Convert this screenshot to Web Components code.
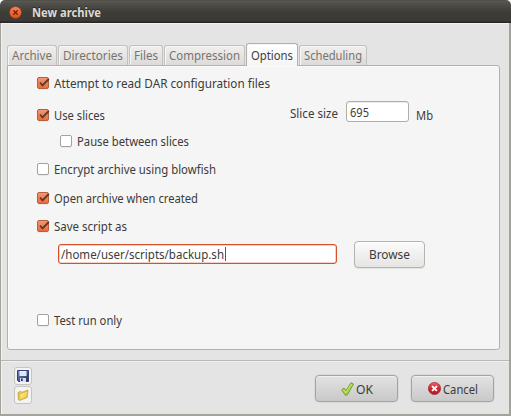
<!DOCTYPE html>
<html lang="en"><head><meta charset="utf-8"><title>New archive</title>
<style>html,body{margin:0;width:511px;height:416px;overflow:hidden;background:#fff}</style></head>
<body><archive-window></archive-window>
<script>
const define=(name,html,ready)=>customElements.define(name,class extends HTMLElement{
  constructor(){super();const t=document.createElement('template');t.innerHTML=html;
    this.attachShadow({mode:'open'}).append(t.content.cloneNode(true));}
  connectedCallback(){if(ready)ready.call(this,this.shadowRoot);}
});

// A label condensed or widened to the width given in its "w" attribute.
define('fit-label',`<style>:host{display:block;flex:none;height:18px;line-height:18px;white-space:pre}
span{display:inline-block;transform-origin:0 50%}</style><span><slot></slot></span>`,function(r){
  const s=r.querySelector('span'),w=+this.getAttribute('w');this.style.width=w+'px';
  const n=s.getBoundingClientRect().width;if(n)s.style.transform='scaleX('+w/n+')';
});

define('title-bar',`<style>:host{display:flex;align-items:center;box-sizing:border-box;height:23px;padding:1px 0 0 9px;gap:10px;
background:linear-gradient(#4a4843 0,#5b5953 1px,#53514b 3px,#3d3c37 12px,#3b3a36 21px,#272622 22px);border-radius:5px 5px 0 0;color:#dfdbd2;font-weight:700;text-shadow:0 -1px #292824}
svg{display:block}fit-label{margin-top:-1px}</style>
<svg width="13" height="13" viewBox="0 0 13 13"><defs><linearGradient id="g" x2="0" y2="1"><stop stop-color="#f6845a"/><stop offset="1" stop-color="#e24c16"/></linearGradient></defs><circle cx="6.5" cy="6.5" r="6" fill="url(#g)" stroke="#8a3a1e" stroke-width=".7"/><path d="M4.4 4.4l4.2 4.2M8.6 4.4L4.4 8.6" stroke="#43200f" stroke-width="1.2"/></svg>
<fit-label w="69"><slot></slot></fit-label>`);

define('tab-item',`<style>:host{display:flex;box-sizing:border-box;height:20px;padding:0 4px;border:1px solid #c3c1be;border-bottom:0;border-radius:3px 3px 0 0;
background:linear-gradient(#f0efee,#dddbd9);box-shadow:inset 1px 1px #f7f7f6;color:#77746f}
:host([active]){height:23px;padding-top:2px;margin-bottom:-1px;background:linear-gradient(#fff,#f5f5f5);border-color:#b2b0ad;color:#3f3e3b;z-index:1}</style><slot></slot>`);

define('check-box',`<style>:host{display:flex;align-items:center;gap:5px;flex:none}
i{display:block;box-sizing:border-box;width:12px;height:12px;border:1px solid #a5a29e;border-radius:2px;background:#fff;box-shadow:0 1px #e9e9e8}
svg{display:none;margin:-2px}
:host([checked]) i{border-color:#b5603f;background:linear-gradient(#f39671,#ed6c3c)}
:host([checked]) svg{display:block}</style>
<i><svg width="15" height="14" viewBox="0 0 15 14"><path d="M4 6.5L6.5 9.4L12.8 3" fill="none" stroke="#5e3a2c" stroke-width="1.8"/></svg></i><slot></slot>`);

define('text-entry',`<style>:host{display:flex;align-items:center;box-sizing:border-box;flex:none;background:#fff;border:1px solid #b0aeaa;border-radius:3px;padding-left:3px;box-shadow:inset 0 1px #ececeb}
:host([focused]){border-color:#d4512a;box-shadow:inset 0 0 0 .5px #eda18a;padding-left:2px}
b{display:none;width:1px;height:14px;background:#555;margin-left:1px}:host([focused]) b{display:block}</style><slot></slot><b></b>`);

define('push-button',`<style>:host{display:flex;align-items:center;justify-content:center;box-sizing:border-box;flex:none;border:1px solid #a5a4a2;border-radius:4px;gap:3px;
background:linear-gradient(#e2e2e2,#c9c9c9);box-shadow:inset 0 1px #f0f0f0,0 0 0 .5px #cfcfce}
:host([light]){background:linear-gradient(#fbfbfb,#e6e5e4);border-color:#b5b3b0;box-shadow:inset 0 1px #fff,0 1px #e5e5e4}
:host([tool]){width:18px;height:18px;background:#f3f3f3;border-color:#c5c4c2;border-radius:3px;box-shadow:none}
</style><slot></slot>`);

define('options-panel',`<style>:host{display:block;box-sizing:border-box;width:493px;height:285px;border:1px solid #b3b1ae;border-radius:0 3px 3px 3px;background:#f5f5f5;padding:7px 0 0 29px;box-shadow:inset 1px 1px #fbfbfb}
.r{display:flex;align-items:center}.in{padding-left:23px}.path{padding-left:21px;gap:17px}
.size{display:flex;align-items:center;margin-left:185px}</style>
<div class="r" style="height:20px"><check-box checked><fit-label w="216">Attempt to read DAR configuration files</fit-label></check-box></div>
<div class="r" style="height:44px"><check-box checked><fit-label w="51">Use slices</fit-label></check-box>
<div class="size"><fit-label w="48" style="margin-top:-5px">Slice size</fit-label><text-entry style="width:63px;height:21px;margin:-7px 7px 0 8px"><fit-label w="19">695</fit-label></text-entry><fit-label w="17">Mb</fit-label></div></div>
<div class="r in" style="height:8px"><check-box><fit-label w="112">Pause between slices</fit-label></check-box></div>
<div class="r" style="height:48px"><check-box><fit-label w="162">Encrypt archive using blowfish</fit-label></check-box></div>
<div class="r" style="height:10px"><check-box checked><fit-label w="144">Open archive when created</fit-label></check-box></div>
<div class="r" style="height:46px"><check-box checked><fit-label w="73">Save script as</fit-label></check-box></div>
<div class="r path" style="height:10px"><text-entry focused style="width:279px;height:20px"><fit-label w="163">/home/user/scripts/backup.sh</fit-label></text-entry><push-button light style="width:71px;height:27px"><fit-label w="41">Browse</fit-label></push-button></div>
<div class="r" style="height:122px"><check-box><fit-label w="68">Test run only</fit-label></check-box></div>`);

define('action-bar',`<style>:host{display:flex;justify-content:space-between;box-sizing:border-box;height:54px;border-top:1px solid #b8b7b5;box-shadow:inset 0 1px #f1f1f1;padding:6px 15px 0 13px}
.t{display:flex;flex-direction:column;gap:1px}.b{display:flex;gap:13px;padding-top:8px}
.b push-button{height:27px}svg{display:block;flex:none}</style>
<div class="t"><push-button tool><svg width="12" height="12" viewBox="0 0 12 12"><defs><linearGradient id="d" x2="1" y2="1"><stop stop-color="#7189c5"/><stop offset="1" stop-color="#202c5b"/></linearGradient></defs><path d="M.5.5h11v11H1.5l-1-1z" fill="url(#d)" stroke="#343f70"/><path d="M2.5 1h7v5h-7z" fill="#edf2fa"/><path d="M3 3h6M3 5h6" stroke="#c0cbe0" stroke-width=".6"/><path d="M3 8h6v4H3z" fill="#d8dce6"/><path d="M4 8.5h1.7V11H4z" fill="#26315d"/></svg></push-button>
<push-button tool><svg width="12" height="12" viewBox="0 0 12 12"><defs><linearGradient id="f" x2="1" y2="1"><stop stop-color="#fff4a0"/><stop offset="1" stop-color="#e9c32e"/></linearGradient></defs><path d="M1 3.4l3-1 .7 1L11 1l-.9 7.5-7.5 2.9-1.2-.7z" fill="#ecc844" stroke="#bf9628" stroke-width=".7"/><path d="M2.9 4.9l7.8-2.7-1 6.1-7 2.6z" fill="url(#f)" stroke="#d3ac30" stroke-width=".5"/></svg></push-button></div>
<div class="b"><push-button style="width:83px;gap:2px"><svg width="13" height="14" viewBox="0 0 13 14"><path d="M.7 7.8l2.3-1.7 2 2.5L10 .8l2.5 1.3L6.2 13l-1.9.2z" fill="#a5d53c" stroke="#678e2c" stroke-width=".8" stroke-linejoin="round"/><path d="M2.4 7.6l2.5 3L10.6 2" fill="none" stroke="#c9ec71" stroke-width=".9"/></svg><fit-label w="17">OK</fit-label></push-button>
<push-button style="width:83px;gap:2px"><svg width="13" height="13" viewBox="0 0 13 13"><defs><linearGradient id="c" x2="0" y2="1"><stop stop-color="#e76666"/><stop offset=".5" stop-color="#cf2631"/><stop offset="1" stop-color="#b51927"/></linearGradient></defs><circle cx="6.5" cy="6.5" r="6.1" fill="url(#c)" stroke="#9f1f2a" stroke-width=".7"/><path d="M4.1 4.1l4.8 4.8M8.9 4.1L4.1 8.9" stroke="#fff" stroke-width="2"/></svg><fit-label w="35">Cancel</fit-label></push-button></div>`);

define('archive-window',`<style>:host{display:block;width:511px;height:416px;color:#3c3b39;font:13px "Noto Sans","Open Sans",sans-serif}
.body{box-sizing:border-box;height:393px;border:1px solid #a5a29c;border-width:0 2px 2px 1px;background:#e4e4e4;box-shadow:inset 1px 1px #f1f1f0;padding-top:20px}
.tabs{display:flex;align-items:flex-end;gap:1px;height:22px;padding-left:6px}.tabs>*{position:relative}
options-panel{margin:0 0 10px 6px}</style>
<title-bar>New archive</title-bar><div class="body"><div class="tabs">
<tab-item><fit-label w="40">Archive</fit-label></tab-item><tab-item><fit-label w="60">Directories</fit-label></tab-item><tab-item><fit-label w="24">Files</fit-label></tab-item><tab-item><fit-label w="71">Compression</fit-label></tab-item><tab-item active><fit-label w="42">Options</fit-label></tab-item><tab-item><fit-label w="58">Scheduling</fit-label></tab-item></div>
<options-panel></options-panel><action-bar></action-bar></div>`);
</script></body></html>
